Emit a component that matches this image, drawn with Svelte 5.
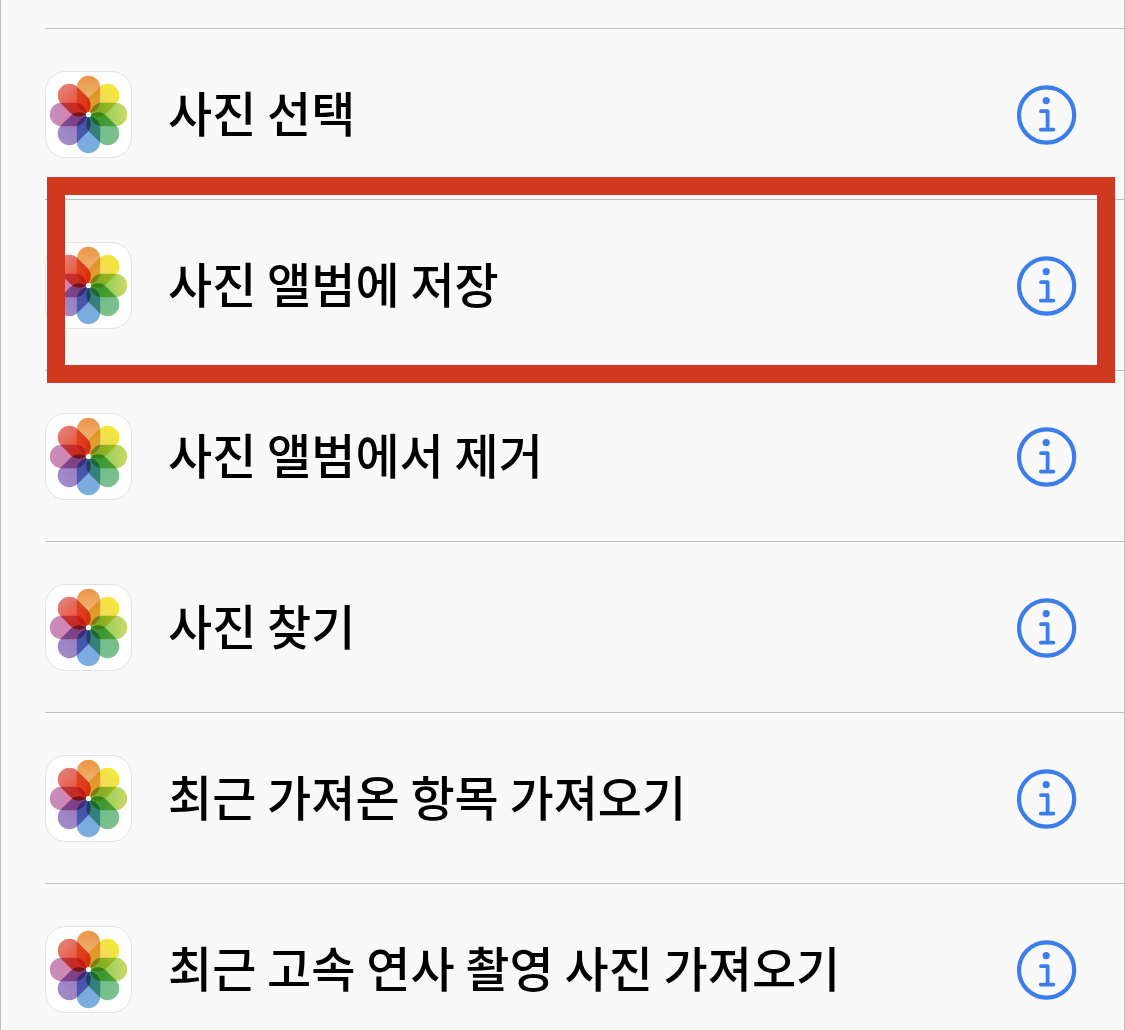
<script>
  const actions = [
    { name: '사진 선택' },
    { name: '사진 앨범에 저장', marked: true },
    { name: '사진 앨범에서 제거' },
    { name: '사진 찾기' },
    { name: '최근 가져온 항목 가져오기' },
    { name: '최근 고속 연사 촬영 사진 가져오기' }
  ];

  // clockwise from the top, outer colour to inner colour
  const petals = [
    { id: 'orange', outer: '#eb9a4c', inner: '#f0b878' },
    { id: 'yellow', outer: '#f3e63c', inner: '#f0d868' },
    { id: 'lime', outer: '#c3d866', inner: '#8ccd5a' },
    { id: 'green', outer: '#7cc08c', inner: '#6ebe8c' },
    { id: 'blue', outer: '#7badde', inner: '#78aae1' },
    { id: 'violet', outer: '#a08ac6', inner: '#967dc3' },
    { id: 'pink', outer: '#c68cba', inner: '#d782af' },
    { id: 'red', outer: '#e27a70', inner: '#ee5032' }
  ];
</script>

<svg class="defs" aria-hidden="true">
  <defs>
    {#each petals as petal}
      <linearGradient id="petal-{petal.id}" x1="0" y1="0" x2="0" y2="1">
        <stop offset="0.1" stop-color={petal.outer} />
        <stop offset="0.7" stop-color={petal.inner} />
      </linearGradient>
    {/each}
  </defs>
</svg>

<main>
  <ul class="actions">
    {#each actions as action}
      <li class="action" class:marked={action.marked}>
        <svg class="app-icon" viewBox="0 0 87 87" aria-hidden="true">
          <rect class="tile" x="0.5" y="0.5" width="86" height="86" rx="20" />
          <g class="flower">
            {#each petals as petal, i}
              <rect
                class="petal"
                x="31.8"
                y="4.8"
                width="23.4"
                height="37"
                rx="11.7"
                fill="url(#petal-{petal.id})"
                transform="rotate({i * 45} 43.5 43.5)"
              />
            {/each}
          </g>
          <circle cx="43.5" cy="43.5" r="2.6" fill="#fff" />
        </svg>
        <span class="name">{action.name}</span>
        <button type="button" class="info" aria-label="{action.name} 정보">
          <svg viewBox="0 0 60 60" aria-hidden="true">
            <circle class="line ring" cx="29.6" cy="30" r="27.6" />
            <circle cx="29.2" cy="15.6" r="3.6" fill="#3b7deb" />
            <path class="line" d="M24 26.2H30.6V44.6M23.8 44.6H36.4" />
          </svg>
        </button>
      </li>
    {/each}
  </ul>
</main>

<style>
  :global(body) {
    margin: 0;
    background: #f9f9f9;
  }

  .defs {
    position: absolute;
    width: 0;
    height: 0;
  }

  main {
    box-sizing: border-box;
    min-height: 100vh;
    padding-top: 28px;
    border-left: 1px solid #c0c0c3;
    border-right: 1px solid #c0c0c3;
    background: #f9f9f9;
    font-family: "Noto Sans CJK KR", sans-serif;
  }

  .actions {
    margin: 0;
    padding: 0 0 0 44px;
    list-style: none;
  }

  .action {
    position: relative;
    display: flex;
    align-items: center;
    gap: 36px;
    padding: 42px 47px 41px 0;
    border-top: 1px solid #c0c0c3;
  }

  .marked {
    z-index: 1;
  }

  .marked::after {
    content: "";
    position: absolute;
    top: -23px;
    right: 9px;
    bottom: -13px;
    left: 2px;
    border: 18px solid #d03820;
    pointer-events: none;
  }

  .app-icon {
    flex: none;
    width: 87px;
    height: 87px;
  }

  .tile {
    fill: #fff;
    stroke: #e4e4e6;
  }

  .flower {
    isolation: isolate;
  }

  .petal {
    mix-blend-mode: multiply;
  }

  .name {
    flex: 1;
    padding-bottom: 8px;
    color: #000;
    font-size: 48px;
    font-weight: 500;
    line-height: 72px;
  }

  .info {
    flex: none;
    width: 60px;
    height: 60px;
    padding: 0;
    border: 0;
    background: none;
    cursor: pointer;
  }

  .info svg {
    display: block;
  }

  .line {
    fill: none;
    stroke: #3b7deb;
    stroke-width: 3.8;
    stroke-linecap: round;
    stroke-linejoin: round;
  }

  .ring {
    stroke-width: 4.2;
  }
</style>
